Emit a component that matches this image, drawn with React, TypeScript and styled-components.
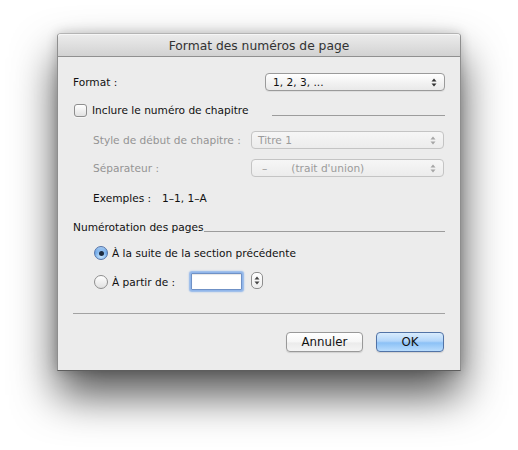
import React from 'react';
import styled, { createGlobalStyle } from 'styled-components';

const Global = createGlobalStyle`
  html, body { margin: 0; padding: 0; background: #ffffff; }
  body { font-family: "DejaVu Sans", "Lucida Grande", sans-serif; -webkit-font-smoothing: antialiased; }
  * { box-sizing: border-box; }
`;

const Page = styled.div`
  width: 518px;
  height: 450px;
  padding: 33px 0 0 57px;
  background: #ffffff;
  overflow: hidden;
`;

const Window = styled.div`
  width: 404px;
  height: 338px;
  display: flex;
  flex-direction: column;
  background: #ececec;
  border: 1px solid #8e8e8e;
  border-top-color: #b4b4b4;
  border-bottom-color: #5e5e5e;
  border-radius: 4px 4px 0 0;
  box-shadow: 0 24px 44px rgba(0, 0, 0, 0.68), 0 0 12px rgba(0, 0, 0, 0.2);
`;

const TitleBar = styled.div`
  height: 23px;
  flex: none;
  display: flex;
  align-items: center;
  justify-content: center;
  border-radius: 3px 3px 0 0;
  background: linear-gradient(#ececec, #d2d2d2);
  border-bottom: 1px solid #909090;
  box-shadow: inset 0 1px 0 #f6f6f6;
  font-size: 12.3px;
  color: #333333;
  padding-top: 1px;
`;

const Body = styled.div`
  flex: 1;
  display: flex;
  flex-direction: column;
  padding: 16px 15px 0 15px;
  font-size: 10.6px;
  color: #111111;
`;

const Row = styled.div<{ $mt?: number; $h?: number; $indent?: number }>`
  display: flex;
  align-items: center;
  height: ${(p) => p.$h ?? 18}px;
  margin-top: ${(p) => p.$mt ?? 0}px;
  padding-left: ${(p) => p.$indent ?? 0}px;
`;

const Label = styled.span<{ $disabled?: boolean; $w?: number; $ml?: number }>`
  color: ${(p) => (p.$disabled ? '#949494' : '#111111')};
  white-space: nowrap;
  ${(p) => (p.$w ? `width: ${p.$w}px;` : '')}
  margin-left: ${(p) => p.$ml ?? 0}px;
`;

const Rule = styled.div<{ $ml?: number; $shift?: number }>`
  flex: 1;
  height: 1px;
  background: #9c9c9c;
  margin-left: ${(p) => p.$ml ?? 0}px;
  margin-top: ${(p) => (p.$shift ?? 0) * 2}px;
`;

const Separator = styled.div`
  height: 1px;
  background: #a2a2a2;
  margin-top: 21px;
`;

const Select = styled.div<{ $w: number; $disabled?: boolean; $pl?: number }>`
  width: ${(p) => p.$w}px;
  height: 18px;
  margin-left: auto;
  margin-right: ${(p) => (p.$disabled ? 1 : 0)}px;
  display: flex;
  align-items: center;
  padding: 0 7px 0 ${(p) => p.$pl ?? 7}px;
  border-radius: 4px;
  border: 1px solid ${(p) => (p.$disabled ? '#c4c4c4' : '#9a9a9a')};
  background: ${(p) =>
    p.$disabled ? 'linear-gradient(#f6f6f6, #ececec)' : 'linear-gradient(#ffffff, #f1f1f1 60%, #e9e9e9)'};
  box-shadow: ${(p) => (p.$disabled ? 'none' : '0 1px 0 rgba(0,0,0,0.06)')};
  color: ${(p) => (p.$disabled ? '#9b9b9b' : '#111111')};
  white-space: nowrap;
`;

const SelectText = styled.span<{ $gap?: number }>`
  flex: 1;
  display: flex;
  gap: ${(p) => p.$gap ?? 0}px;
`;

const Check = styled.span`
  width: 13px;
  height: 13px;
  margin-left: 1px;
  border-radius: 3px;
  border: 1px solid #8e8e8e;
  background: linear-gradient(#ffffff, #f0f0f0 50%, #e2e2e2);
  box-shadow: 0 1px 0 rgba(255, 255, 255, 0.6);
`;

const Radio = styled.span<{ $on?: boolean }>`
  width: 14px;
  height: 14px;
  border-radius: 50%;
  display: flex;
  align-items: center;
  justify-content: center;
  border: 1px solid ${(p) => (p.$on ? '#5674a8' : '#8e8e8e')};
  background: ${(p) =>
    p.$on
      ? 'radial-gradient(circle at 50% 75%, #c7e4fd, transparent 70%), linear-gradient(#a9cdf3, #5b9be3 50%, #7fb7f0)'
      : 'linear-gradient(#ffffff, #f0f0f0 50%, #e0e0e0)'};
  &::after {
    content: '';
    display: ${(p) => (p.$on ? 'block' : 'none')};
    width: 5px;
    height: 5px;
    border-radius: 50%;
    background: #1d2b3f;
  }
`;

const NumberInput = styled.div`
  width: 51px;
  height: 17px;
  margin-left: 16px;
  background: #ffffff;
  border: 1px solid #6f91c6;
  border-radius: 1px;
  box-shadow: 0 0 1.5px 2px #8fb5ea, inset 0 1px 1px rgba(0, 0, 0, 0.1);
`;

const Stepper = styled.div`
  width: 12px;
  height: 17px;
  margin-left: 9px;
  margin-top: -3px;
  border-radius: 5px;
  border: 1px solid #8e8e8e;
  background: linear-gradient(#ffffff, #ededed);
  display: flex;
  align-items: center;
  justify-content: center;
`;

const ButtonBar = styled.div`
  display: flex;
  justify-content: flex-end;
  gap: 13px;
  margin-top: 18px;
  padding-right: 1px;
`;

const Button = styled.button<{ $w: number; $primary?: boolean }>`
  width: ${(p) => p.$w}px;
  height: 20px;
  padding: 0;
  font-family: inherit;
  font-size: 11.8px;
  color: #111111;
  border-radius: 4px;
  border: 1px solid ${(p) => (p.$primary ? '#5273a6' : '#999999')};
  background: ${(p) =>
    p.$primary
      ? 'linear-gradient(#d9ecfd, #b3d6fa 45%, #8cc1f6 55%, #b8dcfd)'
      : 'linear-gradient(#ffffff, #f6f6f6 50%, #ebebeb 55%, #f4f4f4)'};
  box-shadow: 0 1px 1px rgba(0, 0, 0, 0.12);
`;

const Arrows = ({ color = '#333', h = 9 }: { color?: string; h?: number }) => (
  <svg width="6" height={h} viewBox="0 0 6 9" style={{ flex: 'none' }}>
    <path d="M3 0.5 L5.5 3.5 L0.5 3.5 Z" fill={color} />
    <path d="M3 8.5 L5.5 5.5 L0.5 5.5 Z" fill={color} />
  </svg>
);

export default function App() {
  return (
    <>
      <Global />
      <Page>
        <Window>
          <TitleBar>Format des numéros de page</TitleBar>
          <Body>
            <Row>
              <Label>Format :</Label>
              <Select $w={180}>
                <SelectText>1, 2, 3, ...</SelectText>
                <Arrows />
              </Select>
            </Row>

            <Row $mt={10}>
              <Check />
              <Label $ml={5}>Inclure le numéro de chapitre</Label>
              <Rule $ml={23} $shift={5} />
            </Row>

            <Row $mt={12} $indent={20}>
              <Label $disabled>Style de début de chapitre :</Label>
              <Select $w={193} $disabled $pl={6}>
                <SelectText>Titre 1</SelectText>
                <Arrows color="#a6a6a6" />
              </Select>
            </Row>

            <Row $mt={10} $indent={20}>
              <Label $disabled>Séparateur :</Label>
              <Select $w={193} $disabled $pl={10}>
                <SelectText $gap={24}>
                  <span>–</span>
                  <span>(trait d'union)</span>
                </SelectText>
                <Arrows color="#a6a6a6" />
              </Select>
            </Row>

            <Row $mt={12} $indent={20}>
              <Label $w={69}>Exemples :</Label>
              <Label>1–1, 1–A</Label>
            </Row>

            <Row $mt={11}>
              <Label>Numérotation des pages</Label>
              <Rule $shift={4} />
            </Row>

            <Row $mt={8} $indent={21}>
              <Radio $on />
              <Label $ml={4}>À la suite de la section précédente</Label>
            </Row>

            <Row $mt={9} $h={21} $indent={21}>
              <Radio />
              <Label $ml={4}>À partir de :</Label>
              <NumberInput />
              <Stepper>
                <Arrows color="#444" h={9} />
              </Stepper>
            </Row>

            <Separator />

            <ButtonBar>
              <Button $w={77}>Annuler</Button>
              <Button $w={68} $primary>
                OK
              </Button>
            </ButtonBar>
          </Body>
        </Window>
      </Page>
    </>
  );
}
